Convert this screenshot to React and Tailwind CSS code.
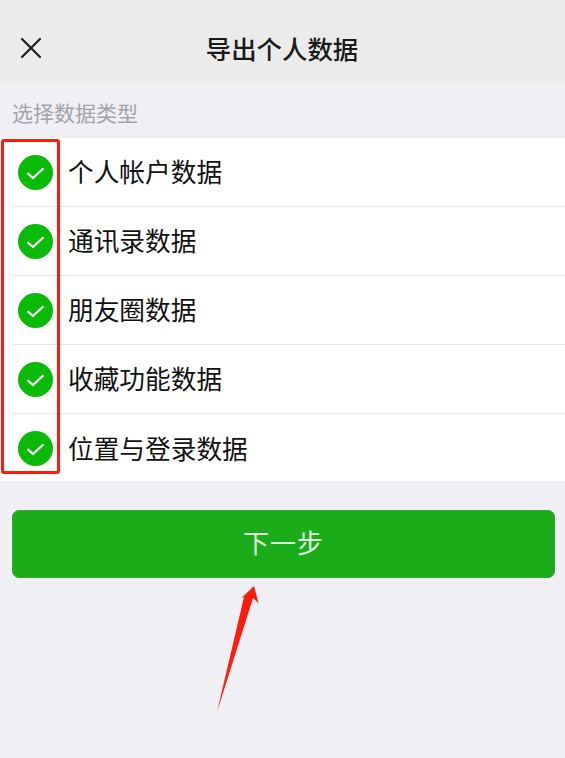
import { X } from "lucide-react";

const rows = ["个人帐户数据", "通讯录数据", "朋友圈数据", "收藏功能数据", "位置与登录数据"];

// Green round tick in front of every data type
const Tick = () => (
    <svg width="35" height="35" viewBox="0 0 35 35" className="shrink-0">
        <circle cx="17.5" cy="17.5" r="17.5" fill="#09bb07" />
        <path d="M9.5 18.2 L15 23 L25.5 13.2" fill="none" stroke="#ffffff" strokeWidth="2.2" />
    </svg>
);

const App = () => {
    return (
        <div className="relative h-[758px] w-[565px] overflow-hidden bg-[#efeff4] font-['Noto_Sans_CJK_SC',sans-serif]">
            {/* Title bar */}
            <div className="relative flex h-[83px] items-center justify-center bg-[#ebebeb] pt-[14px]">
                <X className="absolute left-[13px] top-[30px] text-[#222222]" size={36} strokeWidth={1.5} />
                <h1 className="text-[25.4px] font-medium leading-none text-[#1a1a1a] ml-[-1px]">导出个人数据</h1>
            </div>

            {/* Section label */}
            <div className="flex h-[55px] items-center px-3 text-[21px] leading-none text-[#a3a3a8] pt-[3px]">选择数据类型</div>

            {/* Data type list */}
            <div className="h-[343px] overflow-hidden bg-white">
                {rows.map((name, i) => (
                    <div key={name} className={"ml-3 flex h-[69px] items-center gap-[15px] pl-[6px] " + (i < rows.length - 1 ? "border-b border-[#e8e8e8]" : "")}>
                        <Tick />
                        <span className="mt-[-2px] text-[25.7px] leading-none text-[#111111]">{name}</span>
                    </div>
                ))}
            </div>

            {/* Next step button */}
            <div className="px-3 pt-[29px]">
                <div className="flex h-[68px] w-[543px] items-center justify-center rounded-[7px] border border-[#2fa62c] bg-[#1aad19] pb-[4px] text-[26px] tracking-[1px] leading-none text-[#e4f4e4]">下一步</div>
            </div>

            {/* Red annotation box */}
            <div className="absolute left-[1px] top-[139px] h-[335px] w-[59px] rounded-[3px] border-[3px] border-[#ff1a0e]"></div>

            {/* Red annotation arrow */}
            <svg className="absolute left-0 top-0" width="565" height="758" viewBox="0 0 565 758">
                <path d="M217 712 L244 597 L241.5 598 L254 586 L258.5 603 L253 598 Z" fill="#ff1a0e" />
            </svg>
        </div>
    );
};

export default App;
